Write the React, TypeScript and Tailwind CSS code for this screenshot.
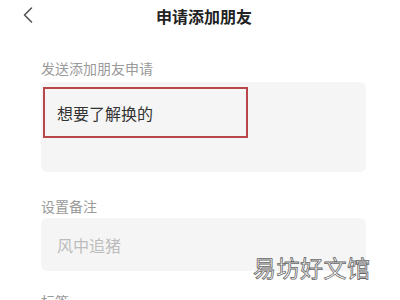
import { ChevronLeft } from "lucide-react";

const font = "font-['Noto_Sans_CJK_SC','Noto_Sans',sans-serif]";

export default function App() {
  return (
    <div className={`relative w-[400px] h-[300px] overflow-hidden bg-white ${font}`}>
      <div className="relative h-[32px] flex items-center justify-center">
        <ChevronLeft className="absolute left-[14px] top-[1px] h-[28px] w-[28px] text-[#555]" strokeWidth={1.4} />
        <h1 className="ml-[8px] text-[16px] leading-[20px] font-bold text-[#222]">申请添加朋友</h1>
      </div>

      <div className="pl-[41px] pr-[34px] pt-[26px]">
        <p className="text-[14px] leading-[20px] text-[#9a9a9a]">发送添加朋友申请</p>
        <div className="mt-[4px] h-[90px] rounded-[6px] bg-[#f5f5f5] pt-[5px] pl-[2px]">
          <div className="w-[205px] h-[51px] border-2 border-[#b8474c] flex items-center pl-[12px]">
            <span className="text-[16px] leading-[20px] text-[#333]">想要了解换的</span>
          </div>
        </div>

        <p className="mt-[24px] text-[14px] leading-[20px] text-[#9a9a9a]">设置备注</p>
        <div className="mt-[2px] h-[53px] rounded-[6px] bg-[#f5f5f5] flex items-center pl-[16px]">
          <span className="text-[16px] leading-[20px] text-[#bdbdbd]">风中追猪</span>
        </div>

        <p className="mt-[20px] text-[14px] leading-[20px] text-[#9a9a9a]">标签</p>
      </div>

      <span className="absolute left-[253px] top-[253px] text-[23px] leading-[28px] text-white [-webkit-text-stroke:0.8px_#666] tracking-[0.5px]">
        易坊好文馆
      </span>
    </div>
  );
}
